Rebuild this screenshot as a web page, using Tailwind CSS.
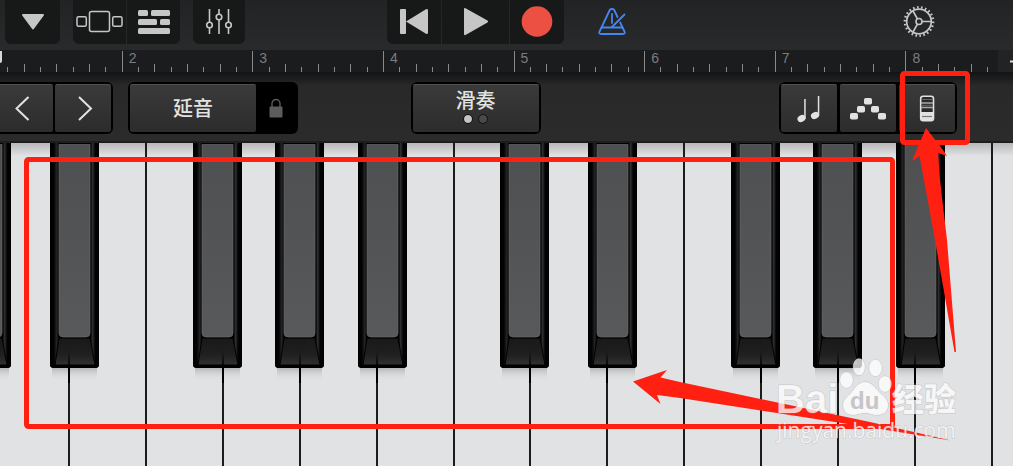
<!DOCTYPE html>
<html lang="zh-CN">
<head>
    <meta charset="UTF-8">
    <meta name="viewport" content="width=device-width, initial-scale=1.0">
    <title>键盘</title>
    <script src="https://cdn.jsdelivr.net/npm/@tailwindcss/browser@4"></script>
</head>
<body class="bg-[#262626] font-['Liberation_Sans','Noto_Sans_CJK_SC',sans-serif]">
    <!-- Black key drawing, shared by all black keys -->
    <svg class="absolute size-0">
        <defs>
            <linearGradient id="side" x1="0" x2="1" y1="0" y2="0">
                <stop offset="0" stop-color="#000"/>
                <stop offset=".08" stop-color="#030303"/>
                <stop offset=".14" stop-color="#262626"/>
                <stop offset=".18" stop-color="#000"/>
                <stop offset=".83" stop-color="#000"/>
                <stop offset=".87" stop-color="#303030"/>
                <stop offset=".92" stop-color="#030303"/>
                <stop offset="1" stop-color="#000"/>
            </linearGradient>
            <linearGradient id="face" x1="0" x2="0" y1="0" y2="1">
                <stop offset="0" stop-color="#4e4f50"/>
                <stop offset="1" stop-color="#58595b"/>
            </linearGradient>
            <linearGradient id="front" x1="0" x2="0" y1="0" y2="1">
                <stop offset="0" stop-color="#191919"/>
                <stop offset=".6" stop-color="#1f1f20"/>
                <stop offset="1" stop-color="#303032"/>
            </linearGradient>
            <linearGradient id="shade" x1="0" x2="0" y1="0" y2="1">
                <stop offset="0" stop-color="#8e8e90"/>
                <stop offset="1" stop-color="#e1e2e4" stop-opacity="0"/>
            </linearGradient>
        </defs>
        <symbol id="blackKey" viewBox="0 0 49 240">
            <rect x="2" y="220" width="45" height="18" fill="url(#shade)"/>
            <path d="M0 0H49V221Q49 225 45 225H4Q0 225 0 221Z" fill="url(#side)"/>
            <path d="M9 195H40L45 222H5Z" fill="url(#front)" stroke="#000"/>
            <path d="M9 1.500H40V190Q40 194 36 194H13Q9 194 9 190Z" fill="url(#face)" stroke="#68696b" stroke-width=".7"/>
            <path d="M0 222H49Q49 225 45 225H4Q0 225 0 222Z" fill="#000"/>
        </symbol>
    </svg>

    <div class="relative h-screen overflow-hidden flex flex-col">
        <!-- Top toolbar -->
        <header class="h-[50px] shrink-0 flex items-start pr-[62px] bg-linear-to-b from-[#222324] to-[#282a2b] text-[#c6c6c6]">
            <div class="flex-1 flex gap-[13px]">
                <button type="button" aria-label="菜单" class="ml-[5px] w-[55px] h-11 rounded-b-md bg-[#171818] flex justify-center">
                    <svg class="w-6 h-11" viewBox="0 0 24 44" fill="currentColor" stroke="currentColor" stroke-width="2" stroke-linejoin="round"><path d="M2 15H22L12 28.500Z"/></svg>
                </button>
                <div class="flex gap-px">
                    <button type="button" aria-label="乐器" class="w-[53px] h-11 rounded-bl-md bg-[#171818] flex justify-center">
                        <svg class="w-12 h-11" viewBox="0 0 48 44" fill="none" stroke="currentColor" stroke-width="1.500"><rect x="13.500" y="11.500" width="20" height="20" rx="2"/><rect x="1" y="16.700" width="9.300" height="9.600" rx="1.500"/><rect x="36.700" y="16.700" width="9.300" height="9.600" rx="1.500"/></svg>
                    </button>
                    <button type="button" aria-label="轨道" class="w-[53px] h-11 rounded-br-md bg-[#171818] flex justify-center">
                        <svg class="w-8 h-11" viewBox="0 0 32 44" fill="currentColor"><rect y="10" width="10" height="6" rx="1.500"/><rect x="13" y="10" width="19" height="6" rx="1.500"/><rect y="19" width="19" height="6" rx="1.500"/><rect x="22" y="19" width="10" height="6" rx="1.500"/><rect y="28" width="32" height="6" rx="1.500"/></svg>
                    </button>
                </div>
                <button type="button" aria-label="混音" class="w-[52px] h-11 rounded-b-md bg-[#171818] flex justify-center">
                    <svg class="w-7 h-11" viewBox="0 0 28 44" fill="none" stroke="currentColor" stroke-width="1.600"><path d="M4.500 9V22M4.500 28V34M14 9V14M14 20V34M23.500 9V22M23.500 28V34"/><circle cx="4.500" cy="25" r="2.800"/><circle cx="14" cy="17" r="2.800"/><circle cx="23.500" cy="25" r="2.800"/></svg>
                </button>
            </div>
            <div class="flex gap-px">
                <button type="button" aria-label="回到开头" class="w-[54px] h-11 rounded-bl-md bg-[#171818] flex justify-center">
                    <svg class="w-7 h-11" viewBox="0 0 28 44" fill="currentColor"><rect y="9" width="6" height="25" rx="1"/><path d="M6 21.500L26 9.300Q28 8.500 28 10.500V32.500Q28 34.500 26 33.700Z"/></svg>
                </button>
                <button type="button" aria-label="播放" class="w-[67px] h-11 bg-[#171818] flex justify-center">
                    <svg class="w-6 h-11" viewBox="0 0 24 44" fill="currentColor"><path d="M0 9Q0 7.500 1.500 8.200L23.500 20.500Q24.500 21.500 23.500 22.500L1.500 35Q0 35.600 0 34Z"/></svg>
                </button>
                <button type="button" aria-label="录音" class="w-[54px] h-11 rounded-br-md bg-[#171818] flex justify-center">
                    <svg class="w-8 h-11" viewBox="0 0 32 44"><circle cx="16" cy="21.500" r="15.300" fill="#eb5043"/></svg>
                </button>
            </div>
            <div class="flex-1 flex justify-between">
                <button type="button" aria-label="节拍器" class="ml-8 text-[#4586f0]">
                    <svg class="w-8 h-11" viewBox="-2 0 32 44" fill="none" stroke="currentColor" stroke-width="1.800" stroke-linecap="round" stroke-linejoin="round"><path d="M3.500 27.500L11.500 10.500Q12.200 9 13.500 9H14.500Q15.800 9 16.500 10.500L19.500 17M22.200 22.500L24.500 27.500"/><path d="M3.500 27.500H24.500L26.500 31.500Q27.500 34 25 34H3Q.5 34 1.500 31.500Z"/><path d="M14 14V23M26.500 14.500L14 27"/></svg>
                </button>
                <button type="button" aria-label="设置" class="mr-4">
                    <svg class="w-8 h-11" viewBox="0 0 32 44" fill="none" stroke="currentColor" stroke-width="1.600"><circle cx="16" cy="21.500" r="12.300" stroke-width="1.700"/><circle cx="16" cy="21.500" r="14.200" stroke-width="2.400" pathLength="66" stroke-dasharray="1.200 1.800"/><circle cx="16" cy="21.500" r="3"/><path d="M19 21.500H28M14.500 19L10 11M14.500 24L10 32"/></svg>
                </button>
            </div>
        </header>

        <!-- Bar ruler -->
        <div class="relative h-[22px] shrink-0 flex bg-[#1a1c1e]">
            <div class="flex-1 overflow-hidden">
                <div id="ruler" class="h-full flex -ml-[9px] -mr-[38px]"></div>
            </div>
            <button type="button" aria-label="添加" class="w-[15px] bg-[#222324] overflow-hidden">
                <svg class="w-[15px] h-[22px]" viewBox="0 0 15 22" stroke="#ddd" stroke-width="2"><path d="M12 11.500H20"/></svg>
            </button>
            <div class="absolute left-0 top-px w-0.5 h-3 bg-[#d8d8d8] rounded-br-sm"></div>
        </div>

        <!-- Keyboard controls -->
        <div class="h-[71px] shrink-0 flex items-start justify-between pt-2.5 pr-[62px] border-b-2 border-[#1d1d1d] bg-linear-to-b from-[#141414] via-[#292929] via-20% to-[#2b2b2b] text-[#e2e2e2]">
            <div class="flex-1 flex gap-[15px]">
                <div class="flex gap-0.5 bg-black rounded-r-md p-0.5 pl-0">
                    <button type="button" aria-label="向左" class="w-[53px] h-12 flex items-center rounded-r-xs border-t border-[#505050] bg-linear-to-b from-[#3a3a3a] to-[#2c2c2c]">
                        <svg class="w-[45px] h-7" viewBox="0 0 45 28" fill="none" stroke="currentColor" stroke-width="2"><path d="M28.500 2L16.500 13.500L28.500 25"/></svg>
                    </button>
                    <button type="button" aria-label="向右" class="w-14 h-12 flex items-center justify-center rounded-xs border-t border-[#505050] bg-linear-to-b from-[#3a3a3a] to-[#2c2c2c]">
                        <svg class="w-[45px] h-7" viewBox="0 0 45 28" fill="none" stroke="currentColor" stroke-width="2"><path d="M18 2L30 13.500L18 25"/></svg>
                    </button>
                </div>
                <div class="flex bg-black rounded-md p-0.5">
                    <button type="button" class="w-[126px] h-12 rounded-xs border-t border-[#505050] bg-linear-to-b from-[#3a3a3a] to-[#2c2c2c] text-xl font-medium">延音</button>
                    <button type="button" aria-label="锁定" class="w-10 h-12 flex items-center justify-center">
                        <svg class="w-4 h-5" viewBox="0 0 16 20"><rect x="1.500" y="8.500" width="13" height="11" rx="1" fill="#5c5c5c"/><path d="M4 9V5.500A4 4 0 0 1 12 5.500V9" fill="none" stroke="#5c5c5c" stroke-width="1.400"/></svg>
                    </button>
                </div>
            </div>
            <div class="bg-black rounded-md p-0.5">
                <button type="button" class="w-[126px] h-12 flex flex-col items-center rounded-xs border-t border-[#505050] bg-linear-to-b from-[#3a3a3a] to-[#2c2c2c]">
                    <span class="h-7 leading-8 text-xl font-medium">滑奏</span>
                    <span class="flex gap-[7px] pt-0.5">
                        <span class="size-2 rounded-full bg-[#c4c4c4] outline outline-black/60"></span>
                        <span class="size-2 rounded-full bg-[#4a4a4a] outline outline-black/60"></span>
                    </span>
                </button>
            </div>
            <div class="flex-1 flex justify-end">
                <div class="flex gap-[3px] bg-black rounded-md p-0.5 -mr-1.5">
                    <button type="button" aria-label="音阶" class="w-14 h-12 flex items-center justify-center rounded-xs border-t border-[#505050] bg-linear-to-b from-[#3a3a3a] to-[#2c2c2c]">
                        <svg class="w-7 h-7" viewBox="0 0 28 28" fill="currentColor"><ellipse cx="6.500" cy="23.500" rx="4.200" ry="3.300" transform="rotate(-25 6.500 23.500)"/><rect x="9.200" y="4" width="1.500" height="19.500"/><ellipse cx="20" cy="20.500" rx="4.200" ry="3.300" transform="rotate(-25 20 20.500)"/><rect x="22.800" y="1" width="1.500" height="19.500"/></svg>
                    </button>
                    <button type="button" aria-label="琶音器" class="w-14 h-12 flex items-center justify-center rounded-xs border-t border-[#505050] bg-linear-to-b from-[#3a3a3a] to-[#2c2c2c]">
                        <svg class="w-9 h-7" viewBox="0 0 36 28" fill="currentColor"><rect y="18" width="8" height="6.500" rx="1.800"/><rect x="7" y="11" width="8" height="6.500" rx="1.800"/><rect x="14" y="3" width="8" height="6.500" rx="1.800"/><rect x="21" y="11" width="8" height="6.500" rx="1.800"/><rect x="28" y="18" width="8" height="6.500" rx="1.800"/></svg>
                    </button>
                    <button type="button" aria-label="键盘设置" class="w-14 h-12 flex items-center justify-center rounded-xs border-t border-[#505050] bg-linear-to-b from-[#3a3a3a] to-[#2c2c2c]">
                        <svg class="w-4 h-7" viewBox="0 0 16 28"><rect x="1.700" y="1.200" width="12.800" height="24.500" rx="2.500" fill="#2a2a2a" stroke="currentColor" stroke-width="1.600"/><path d="M2 8H14M2 12.500H14" stroke="#aaa" stroke-width="1.400"/><path d="M2 4.500H14M2 10.300H14" stroke="#666"/><path d="M2 17H14V23.500Q14 25.500 12 25.500H4Q2 25.500 2 23.500Z" fill="currentColor"/><path d="M3 21.500H13" stroke="#777" stroke-width="1.200"/></svg>
                    </button>
                </div>
            </div>
        </div>

        <!-- Keys -->
        <div id="keys" class="flex-1 flex -ml-[7px] -mr-[57px]"></div>

        <!-- Marks and watermark over the keyboard -->
        <svg class="absolute left-0 top-0 w-[1013px] h-[466px] pointer-events-none" viewBox="0 0 1013 466">
            <g fill="none" stroke="#ff2011" stroke-width="5">
                <rect x="26.500" y="159.500" width="866" height="267" rx="2"/>
                <rect x="902.500" y="73.500" width="65" height="69" rx="2"/>
            </g>
            <g fill="#ff2011">
                <path d="M926 128L943 150L947 156L938 153L940 180L947 240L956 352L954.500 352L935 240L919.500 156L912 161L917 149Z"/>
                <path d="M633 381.500L667 370L660.500 377.500L680 382L870 422L951 440.500L880 429L777 413L680 398L657 395L660.500 404Z"/>
            </g>
            <g fill="#fff" fill-opacity=".75" stroke="#999" stroke-opacity=".4" stroke-width="1" paint-order="stroke">
                <text x="776" y="413" font-size="40" class="font-bold font-['Liberation_Sans',sans-serif]">Bai</text>
                <ellipse cx="846.500" cy="380" rx="6.500" ry="8"/>
                <ellipse cx="859" cy="367" rx="6" ry="8.500"/>
                <ellipse cx="875.500" cy="368" rx="6.500" ry="8.500"/>
                <ellipse cx="885" cy="384" rx="6.500" ry="8"/>
                <path d="M865 382C872 382 875 388 880 393C886 398 889 402 888 407C887 412 883 415 877 415C872 415 870 413 865 413C860 413 858 415 853 415C847 415 843 411 843 405C843 400 847 397 851 393C855 388 858 382 865 382Z"/>
                <text x="892" y="411" font-size="32" class="font-black font-['Noto_Sans_CJK_SC',sans-serif]">经验</text>
                <text x="777" y="438" font-size="21" class="font-['Open_Sans',sans-serif]">jingyan.baidu.com</text>
            </g>
            <text x="850" y="409" font-size="24" fill="#c6c6c8" class="font-bold font-['Liberation_Sans',sans-serif]">du</text>
        </svg>
    </div>

    <script>
        // Ruler: one block per bar, eight ticks in each
        const ruler = document.getElementById('ruler');
        for (let bar = 1; bar <= 8; bar++) {
            let ticks = '';
            for (let i = 0; i < 8; i++) {
                const height = i === 0 ? 'h-[21px]' : i % 2 ? 'h-[5px]' : 'h-2';
                ticks += `<div class="flex-1 flex items-end"><div class="w-px bg-[#8a8a8a] ${height}"></div></div>`;
            }
            const label = bar > 1 ? `<span class="absolute left-[7px] top-0 text-sm leading-4 text-[#7d7d7d]">${bar}</span>` : '';
            ruler.innerHTML += `<div class="relative flex-1 flex">${label}${ticks}</div>`;
        }

        // Black keys sit on the left edge of a white key, shifted by their place in the octave
        const shift = { left: '-left-[31px]', mid: '-left-[26px]', right: '-left-[20px]' };
        const seam = { left: 'left-[29px]', mid: 'left-6', right: 'left-[18px]' };
        const layout = ['left', 'right', '', 'left', 'mid', 'right', '', 'left', 'right', '', 'left', 'mid', 'right', ''];
        const keys = document.getElementById('keys');
        layout.forEach((place, i) => {
            const black = place
                ? `<button type="button" aria-label="黑键" class="absolute top-0 w-[49px] h-60 ${shift[place]}">
                       <svg class="w-[49px] h-60"><use href="#blackKey"/></svg>
                       <span class="absolute top-[208px] h-8 w-0.5 bg-linear-to-b from-black/0 to-black to-50% ${seam[place]}"></span>
                   </button>`
                : '';
            const note = i === 6 ? '<span class="absolute left-[21px] -bottom-[23px] text-[22px] leading-6 text-[#9a9a9c]">C4</span>' : '';
            keys.innerHTML += `<div class="relative flex-1">
                <button type="button" aria-label="白键" class="block w-full h-full border-r-2 border-[#1c1c1c] bg-linear-to-b from-[#b8b8ba] via-[#e1e2e4] via-4% to-[#e1e2e4]">${note}</button>
                ${black}
            </div>`;
        });
    </script>
</body>
</html>
